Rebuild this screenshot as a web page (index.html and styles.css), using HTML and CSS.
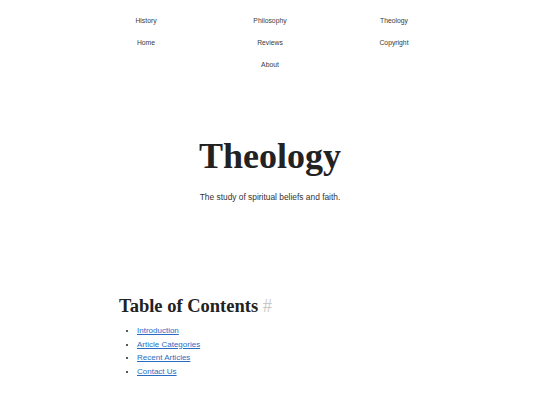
FILE: index.html
```html
<!DOCTYPE html>
<html lang="en">
<head>
<meta charset="utf-8">
<title>Theology</title>
<link rel="stylesheet" href="styles.css">
</head>
<body>
<nav class="nav">
  <a class="nav-link" href="#">History</a>
  <a class="nav-link" href="#">Philosophy</a>
  <a class="nav-link" href="#">Theology</a>
  <a class="nav-link" href="#">Home</a>
  <a class="nav-link" href="#">Reviews</a>
  <a class="nav-link" href="#">Copyright</a>
  <a class="nav-link nav-last" href="#">About</a>
</nav>
<header class="hero">
  <h1 class="title">Theology</h1>
  <p class="subtitle">The study of spiritual beliefs and faith.</p>
</header>
<main class="content">
  <h2 class="toc-title">Table of Contents <span class="anchor">#</span></h2>
  <ul class="toc">
    <li><a href="#">Introduction</a></li>
    <li><a href="#">Article Categories</a></li>
    <li><a href="#">Recent Articles</a></li>
    <li><a href="#">Contact Us</a></li>
  </ul>
</main>
</body>
</html>
```
FILE: styles.css
```css
html, body {
  margin: 0;
  padding: 0;
  background: #ffffff;
}
body {
  font-family: "Liberation Sans", Arial, sans-serif;
  color: #222;
}
.nav {
  width: 372px;
  margin: 0 auto;
  padding-top: 10px;
  display: grid;
  grid-template-columns: repeat(3, 1fr);
  row-gap: 0;
}
.nav-link {
  text-align: center;
  font-size: 6.8px;
  line-height: 22px;
  color: #3a3a3a;
  text-decoration: none;
}
.nav-last {
  grid-column: 2;
}
.hero {
  text-align: center;
  padding-top: 60px;
}
.title {
  font-family: "Liberation Serif", "Times New Roman", serif;
  font-weight: bold;
  font-size: 36px;
  line-height: 40px;
  margin: 0;
  color: #222;
}
.subtitle {
  font-size: 8.4px;
  margin: 15px 0 0;
  line-height: 12px;
  color: #333;
}
.content {
  width: 302px;
  margin: 92px auto 0;
}
.toc-title {
  font-family: "Liberation Serif", "Times New Roman", serif;
  font-weight: bold;
  font-size: 18.5px;
  line-height: 22px;
  margin: 0;
  color: #222;
}
.anchor {
  font-weight: normal;
  color: #c8c8c8;
}
.toc {
  margin: 7px 0 0;
  padding-left: 18px;
  font-size: 8px;
  line-height: 13.7px;
  color: #222;
}
.toc a {
  color: #2a6cc4;
}
```
